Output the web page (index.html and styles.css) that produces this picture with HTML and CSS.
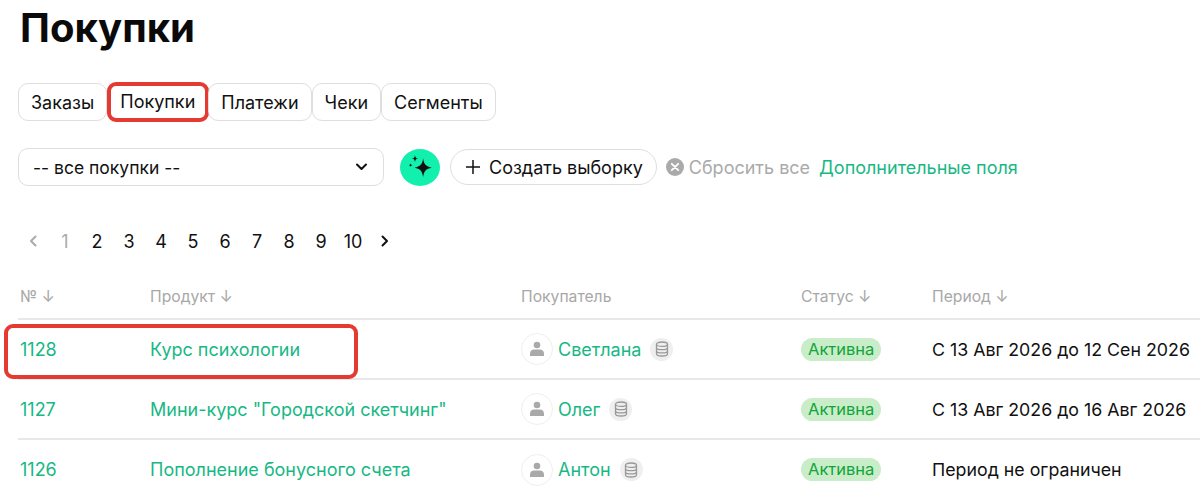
FILE: index.html
```html
<!DOCTYPE html>
<html lang="ru">
<head>
<meta charset="utf-8">
<title>Покупки</title>
<link rel="stylesheet" href="styles.css">
</head>
<body>
<main class="page">
  <h1 class="title">Покупки</h1>
  <nav class="tabs">
    <a class="tab">Заказы</a>
    <a class="tab tab-active">Покупки<span class="mark mark-tab"></span></a>
    <a class="tab">Платежи</a>
    <a class="tab">Чеки</a>
    <a class="tab">Сегменты</a>
  </nav>
  <div class="filters">
    <div class="select"><span>-- все покупки --</span>
      <svg class="chev" viewBox="0 0 12 8" width="13" height="8"><path d="M1.500 1.500 6 6l4.500-4.500" fill="none" stroke="#111" stroke-width="2" stroke-linecap="round" stroke-linejoin="round"/></svg>
    </div>
    <span class="ai">
      <svg viewBox="0 0 24 24" width="30" height="30"><path d="M14.500 5c.7 5 2.200 6.600 7 7.500-4.800.9-6.300 2.500-7 7.500-.7-5-2.200-6.600-7-7.500 4.800-.9 6.300-2.500 7-7.500z" fill="#111"/><path d="M8 2.500c.3 1.800.8 2.400 2.500 2.700-1.700.3-2.200.9-2.500 2.700-.3-1.800-.8-2.400-2.500-2.700 1.700-.3 2.200-.9 2.500-2.700z" fill="#111"/><path d="M4.500 9c.15 1 .5 1.350 1.500 1.500-1 .15-1.350.5-1.500 1.500-.15-1-.5-1.350-1.500-1.500 1-.15 1.350-.5 1.500-1.500z" fill="#111"/></svg>
    </span>
    <button class="create">
      <svg viewBox="0 0 14 14" width="14" height="14"><path d="M7 0v14M0 7h14" stroke="#111" stroke-width="1.500" fill="none"/></svg>
      Создать выборку
    </button>
    <span class="reset">
      <svg viewBox="0 0 18 18" width="18" height="18"><circle cx="9" cy="9" r="9" fill="#aaa"/><path d="M5.800 5.800l6.400 6.400M12.200 5.800l-6.400 6.400" stroke="#fff" stroke-width="1.800" stroke-linecap="round"/></svg>
      Сбросить все
    </span>
    <a class="extra">Дополнительные поля</a>
  </div>
  <div class="pager">
    <svg class="pg-arrow" viewBox="0 0 8 12" width="8" height="12"><path d="M6.500 1.500 2 6l4.500 4.500" fill="none" stroke="#aaa" stroke-width="2" stroke-linecap="round" stroke-linejoin="round"/></svg>
    <span class="num num-off">1</span><span class="num">2</span><span class="num">3</span><span class="num">4</span><span class="num">5</span><span class="num">6</span><span class="num">7</span><span class="num">8</span><span class="num">9</span><span class="num">10</span>
    <svg class="pg-arrow" viewBox="0 0 8 12" width="8" height="12"><path d="M1.500 1.500 6 6l-4.500 4.500" fill="none" stroke="#111" stroke-width="2" stroke-linecap="round" stroke-linejoin="round"/></svg>
  </div>
  <table class="grid">
    <colgroup><col class="c1"><col class="c2"><col class="c3"><col class="c4"><col class="c5"></colgroup>
    <thead>
      <tr>
        <th>№ <span class="arr">↓</span></th>
        <th>Продукт <span class="arr">↓</span></th>
        <th>Покупатель</th>
        <th>Статус <span class="arr">↓</span></th>
        <th>Период <span class="arr">↓</span></th>
      </tr>
    </thead>
    <tbody>
      <tr class="row-marked">
        <td class="link">1128<span class="mark mark-row"></span></td>
        <td class="link">Курс психологии</td>
        <td><div class="buyer"><span class="avatar"><svg viewBox="0 0 16 16" width="16" height="16"><circle cx="8" cy="4" r="3.300" fill="#a9a9a9"/><path d="M1 15v-2.500C1 10 3 8.500 5 8.500h6c2 0 4 1.500 4 4V15z" fill="#a9a9a9"/></svg></span><span class="link">Светлана</span><span class="db"><svg viewBox="0 0 14 16" width="14" height="16"><g fill="none" stroke="#999" stroke-width="1.300"><ellipse cx="7" cy="3.200" rx="5.500" ry="2.200"/><path d="M1.500 3.200v9.600c0 1.200 2.500 2.200 5.500 2.200s5.500-1 5.500-2.200V3.200M1.500 6.500c0 1.200 2.500 2.200 5.500 2.200s5.500-1 5.500-2.200M1.500 9.700c0 1.200 2.500 2.200 5.500 2.200s5.500-1 5.500-2.200"/></g></svg></span></div></td>
        <td><span class="badge">Активна</span></td>
        <td>С 13 Авг 2026 до 12 Сен 2026</td>
      </tr>
      <tr>
        <td class="link">1127</td>
        <td class="link">Мини-курс "Городской скетчинг"</td>
        <td><div class="buyer"><span class="avatar"><svg viewBox="0 0 16 16" width="16" height="16"><circle cx="8" cy="4" r="3.300" fill="#a9a9a9"/><path d="M1 15v-2.500C1 10 3 8.500 5 8.500h6c2 0 4 1.500 4 4V15z" fill="#a9a9a9"/></svg></span><span class="link">Олег</span><span class="db"><svg viewBox="0 0 14 16" width="14" height="16"><g fill="none" stroke="#999" stroke-width="1.300"><ellipse cx="7" cy="3.200" rx="5.500" ry="2.200"/><path d="M1.500 3.200v9.600c0 1.200 2.500 2.200 5.500 2.200s5.500-1 5.500-2.200V3.200M1.500 6.500c0 1.200 2.500 2.200 5.500 2.200s5.500-1 5.500-2.200M1.500 9.700c0 1.200 2.500 2.200 5.500 2.200s5.500-1 5.500-2.200"/></g></svg></span></div></td>
        <td><span class="badge">Активна</span></td>
        <td>С 13 Авг 2026 до 16 Авг 2026</td>
      </tr>
      <tr>
        <td class="link">1126</td>
        <td class="link">Пополнение бонусного счета</td>
        <td><div class="buyer"><span class="avatar"><svg viewBox="0 0 16 16" width="16" height="16"><circle cx="8" cy="4" r="3.300" fill="#a9a9a9"/><path d="M1 15v-2.500C1 10 3 8.500 5 8.500h6c2 0 4 1.500 4 4V15z" fill="#a9a9a9"/></svg></span><span class="link">Антон</span><span class="db"><svg viewBox="0 0 14 16" width="14" height="16"><g fill="none" stroke="#999" stroke-width="1.300"><ellipse cx="7" cy="3.200" rx="5.500" ry="2.200"/><path d="M1.500 3.200v9.600c0 1.200 2.500 2.200 5.500 2.200s5.500-1 5.500-2.200V3.200M1.500 6.500c0 1.200 2.500 2.200 5.500 2.200s5.500-1 5.500-2.200M1.500 9.700c0 1.200 2.500 2.200 5.500 2.200s5.500-1 5.500-2.200"/></g></svg></span></div></td>
        <td><span class="badge">Активна</span></td>
        <td>Период не ограничен</td>
      </tr>
    </tbody>
  </table>
</main>
</body>
</html>
```
FILE: styles.css
```css
* { box-sizing: border-box; }
html, body { margin: 0; height: 497px; overflow: hidden; background: #fff; }
body { font-family: Inter, "Noto Sans", sans-serif; font-size: 18px; color: #111; }
.page { padding-left: 18px; width: 1200px; }
.title { margin: 0 0 0 2px; font-size: 40px; line-height: 56px; font-weight: 700; color: #0a0a0a; }
.tabs { display: flex; margin-top: 27px; height: 38px; }
.tab { position: relative; display: flex; align-items: center; height: 38px; padding: 0 12px; border: 1px solid #dedede; border-radius: 10px; background: #fff; }
.tab-active { border-bottom: 2px solid #17bf8b; }
.mark { position: absolute; border: 4px solid #e53a32; border-radius: 9px; pointer-events: none; }
.mark-tab { left: -1px; top: -2px; right: -2px; bottom: -3px; }
.filters { display: flex; align-items: center; margin-top: 27px; height: 38px; }
.select { display: flex; align-items: center; justify-content: space-between; width: 366px; height: 38px; padding: 0 15px 0 14px; border: 1px solid #dedede; border-radius: 10px; font-size: 17.5px; }
.ai { display: flex; align-items: center; justify-content: center; flex: none; width: 40px; height: 37px; margin-left: 16px; border-radius: 50%; background: #12f0ad; }
.create { display: flex; align-items: center; gap: 9px; height: 36px; margin-left: 10px; padding: 0 13px 0 15px; border: 1px solid #dedede; border-radius: 18px; background: #fff; font: inherit; color: #111; }
.reset { display: flex; align-items: center; gap: 5px; margin-left: 9px; color: #aaa; }
.extra { margin-left: 9px; color: #17b884; }
.pager { display: flex; align-items: center; margin: 45px 0 0 0; height: 20px; }
.num { width: 32px; text-align: center; }
.num-off { color: #aaa; }
.pg-arrow { margin: 0 12px 0 11px; }
.num + .pg-arrow { margin: 0 0 0 12px; }
.grid { width: 1182px; margin-top: 23px; table-layout: fixed; border-collapse: collapse; }
.c1 { width: 130px; } .c2 { width: 371px; } .c3 { width: 280px; } .c4 { width: 131px; } .c5 { width: 270px; }
th { height: 45px; padding: 0 0 0 2px; text-align: left; font-weight: 400; font-size: 15.700px; color: #a8a8a8; border-bottom: 2px solid #e8e8e8; }
.arr { font-size: 16px; }
td { position: relative; height: 60px; padding: 0 0 0 2px; border-bottom: 2px solid #e8e8e8; white-space: nowrap; }
td:last-child { font-size: 17.800px; }
tbody tr:last-child td { border-bottom: 0; }
.link { color: #17b884; }
.mark-row { left: -14px; top: 4px; width: 354px; bottom: -1px; }
.buyer { display: flex; align-items: center; }
.avatar { display: flex; align-items: center; justify-content: center; width: 32px; height: 32px; margin-right: 5px; border: 1px solid #efefef; border-radius: 50%; }
.db { display: flex; align-items: center; justify-content: center; width: 23px; height: 23px; margin-left: 9px; border-radius: 50%; background: #efefef; }
.badge { display: inline-block; height: 23px; line-height: 23px; padding: 0 7px; border-radius: 12px; background: #c9ecc9; color: #0fa53a; font-size: 16.500px; }
```
